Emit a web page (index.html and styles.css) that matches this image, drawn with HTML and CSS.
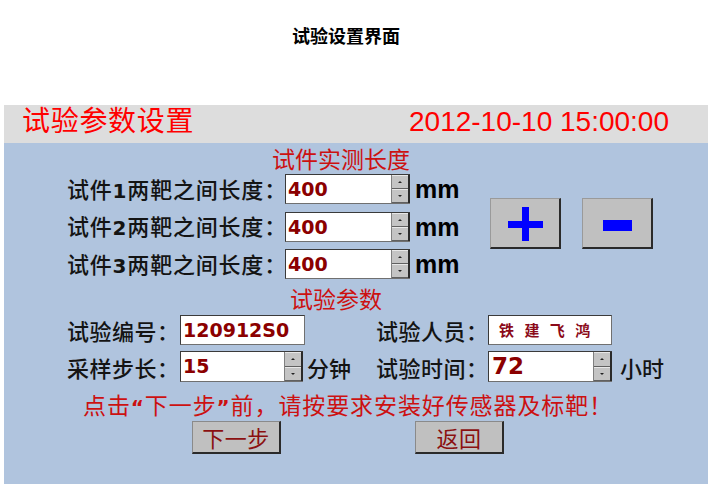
FILE: index.html
```html
<!DOCTYPE html>
<html lang="zh-CN">
<head>
<meta charset="utf-8">
<title>试验设置界面</title>
<link rel="stylesheet" href="styles.css">
</head>
<body>
<div class="page-title">试验设置界面</div>
<div class="panel">
  <div class="header">
    <span class="htitle">试验参数设置</span>
    <span class="date">2012-10-10 15:00:00</span>
  </div>
  <div class="content">
    <div class="sect sect1">试件实测长度</div>
    <div class="lengths">
      <div class="rows">
        <div class="row">
          <span class="label">试件<b class="num">1</b>两靶之间长度：</span>
          <div class="spin w125"><span class="val">400</span><div class="arrows"><i class="ar"><s class="up"></s></i><i class="ar"><s class="dn"></s></i></div></div>
          <span class="unit">mm</span>
        </div>
        <div class="row">
          <span class="label">试件<b class="num">2</b>两靶之间长度：</span>
          <div class="spin w125"><span class="val">400</span><div class="arrows"><i class="ar"><s class="up"></s></i><i class="ar"><s class="dn"></s></i></div></div>
          <span class="unit">mm</span>
        </div>
        <div class="row">
          <span class="label">试件<b class="num">3</b>两靶之间长度：</span>
          <div class="spin w125"><span class="val">400</span><div class="arrows"><i class="ar"><s class="up"></s></i><i class="ar"><s class="dn"></s></i></div></div>
          <span class="unit">mm</span>
        </div>
      </div>
      <div class="pm">
        <div class="pmbtn"><span class="plus-h"></span><span class="plus-v"></span></div>
        <div class="pmbtn"><span class="minus"></span></div>
      </div>
    </div>
    <div class="sect sect2">试验参数</div>
    <div class="params">
      <span class="plabel">试验编号：</span>
      <div class="pfield"><div class="box w125"><span class="val">120912S0</span></div></div>
      <span class="plabel">试验人员：</span>
      <div class="pfield"><div class="box w124"><span class="name">铁 建 飞 鸿</span></div></div>

      <span class="plabel">采样步长：</span>
      <div class="pfield"><div class="spin w123 tall"><span class="val">15</span><div class="arrows"><i class="ar"><s class="up"></s></i><i class="ar"><s class="dn"></s></i></div></div><span class="punit">分钟</span></div>
      <span class="plabel">试验时间：</span>
      <div class="pfield"><div class="spin w124 tall"><span class="val big">72</span><div class="arrows"><i class="ar"><s class="up"></s></i><i class="ar"><s class="dn"></s></i></div></div><span class="punit far">小时</span></div>
    </div>
    <div class="warn">点击<span class="q">“</span>下一步<span class="q">”</span>前，请按要求安装好传感器及标靶！</div>
    <div class="actions">
      <div class="btn">下一步</div>
      <div class="btn">返回</div>
    </div>
  </div>
</div>
</body>
</html>
```

FILE: styles.css
```css
* { box-sizing: border-box; }
body {
  margin: 0;
  background: #ffffff;
  font-family: "Noto Sans CJK SC", "DejaVu Sans", sans-serif;
}
.page-title {
  height: 105px;
  padding-top: 24px;
  padding-left: 292px;
  font-size: 18px;
  line-height: 22px;
  font-weight: 700;
  color: #000;
}
.panel {
  margin-left: 4px;
  width: 704px;
  height: 379px;
  background: #b0c4de;
}
.header {
  height: 38px;
  background: #dddddd;
  display: flex;
  justify-content: space-between;
  align-items: flex-start;
  padding-left: 18px;
  padding-right: 39px;
}
.htitle {
  font-size: 28px;
  line-height: 28px;
  letter-spacing: 0.7px;
  color: #ff0000;
}
.date {
  font-family: "Liberation Sans", Arial, sans-serif;
  font-size: 28px;
  line-height: 28px;
  margin-top: 3px;
  color: #ff0000;
}
.content {
  padding-left: 63px;
}
.sect {
  font-size: 23px;
  line-height: 26px;
  color: #cc1111;
}
.sect1 { margin-top: 2px; padding-left: 205px; }
.sect2 { margin-top: 6px; padding-left: 223px; }
.lengths {
  display: flex;
  padding-top: 3px;
}
.rows {
  width: 423px;
  display: flex;
  flex-direction: column;
  gap: 7.5px;
}
.row {
  display: flex;
  align-items: center;
  height: 30px;
}
.label {
  width: 218px;
  font-size: 22px;
  line-height: 26px;
  font-weight: 500;
  letter-spacing: 0.8px;
  color: #141414;
  white-space: nowrap;
}
.num {
  font-family: "DejaVu Sans", sans-serif;
  font-weight: 700;
  font-size: 20px;
}
.spin, .box {
  display: flex;
  height: 30px;
  background: #fff;
  border-top: 1px solid #3a3a3a;
  border-left: 1px solid #3a3a3a;
  border-bottom: 1px solid #707070;
}
.box { border-right: 1px solid #707070; }
.spin.tall { height: 31px; }
.w125 { width: 125px; }
.w124 { width: 124px; }
.w123 { width: 123px; }
.val {
  flex: 1;
  padding-left: 2px;
  font-family: "DejaVu Sans", sans-serif;
  font-weight: 700;
  font-size: 19px;
  line-height: 28px;
  color: #8b0000;
}
.val.big { font-size: 23px; padding-left: 3px; }
.name {
  padding-left: 10px;
  font-size: 15px;
  font-weight: 700;
  line-height: 28px;
  letter-spacing: 4px;
  word-spacing: -1px;
  color: #8b0a1a;
}
.arrows {
  width: 19px;
  display: flex;
  flex-direction: column;
  border-left: 1px solid #808080;
  border-right: 2px solid #2a2a2a;
}
.ar {
  flex: 1;
  background: #c4c4c4;
  border-top: 1px solid #e8e8e8;
  border-bottom: 1px solid #606060;
  display: flex;
  align-items: center;
  justify-content: center;
}
.ar s {
  display: block;
  width: 0;
  height: 0;
  border-left: 2px solid transparent;
  border-right: 2px solid transparent;
}
.ar s.up { border-bottom: 2px solid #222; }
.ar s.dn { border-top: 2px solid #222; }
.unit {
  margin-left: 5px;
  font-family: "Liberation Sans", Arial, sans-serif;
  font-weight: 700;
  font-size: 25px;
  line-height: 28px;
  color: #000;
}
.pm {
  display: flex;
  gap: 21px;
  margin-top: 24px;
  align-self: flex-start;
}
.pmbtn {
  position: relative;
  width: 71px;
  height: 51px;
  background: #c0c0c0;
  border-top: 1px solid #9a9a9a;
  border-left: 1px solid #9a9a9a;
  border-right: 2px solid #2a2a2a;
  border-bottom: 2px solid #2a2a2a;
}
.plus-h {
  position: absolute;
  left: 17px;
  top: 22px;
  width: 35px;
  height: 7px;
  background: #0000ff;
}
.plus-v {
  position: absolute;
  left: 31px;
  top: 8px;
  width: 7px;
  height: 34px;
  background: #0000ff;
}
.minus {
  position: absolute;
  left: 20px;
  top: 21px;
  width: 29px;
  height: 11px;
  background: #0000ff;
}
.params {
  margin-top: 4px;
  display: grid;
  grid-template-columns: 113px 196px 112px auto;
  grid-template-rows: 30px 31px;
  row-gap: 6px;
  align-items: center;
}
.plabel {
  font-size: 22px;
  line-height: 26px;
  font-weight: 500;
  letter-spacing: 0.5px;
  color: #141414;
  white-space: nowrap;
}
.pfield {
  display: flex;
  align-items: center;
}
.punit {
  margin-left: 4px;
  font-size: 22px;
  line-height: 26px;
  font-weight: 500;
  color: #141414;
}
.punit.far { margin-left: 8px; }
.warn {
  height: 26px;
  margin-top: 9px;
  padding-left: 16px;
  font-size: 23px;
  line-height: 26px;
  letter-spacing: 0.9px;
  color: #cc1111;
  white-space: nowrap;
}
.q {
  font-family: "DejaVu Sans", sans-serif;
  font-weight: 700;
  font-size: 20px;
  line-height: 0;
}
.actions {
  margin-top: 4px;
  display: flex;
  gap: 134px;
  padding-left: 125px;
}
.btn {
  width: 89px;
  height: 33px;
  background: #c0c0c0;
  border-top: 1px solid #8a8a8a;
  border-left: 1px solid #8a8a8a;
  border-right: 2px solid #2a2a2a;
  border-bottom: 2px solid #2a2a2a;
  text-align: center;
  font-size: 22px;
  line-height: 30px;
  letter-spacing: 0.5px;
  color: #8b1010;
}
```
